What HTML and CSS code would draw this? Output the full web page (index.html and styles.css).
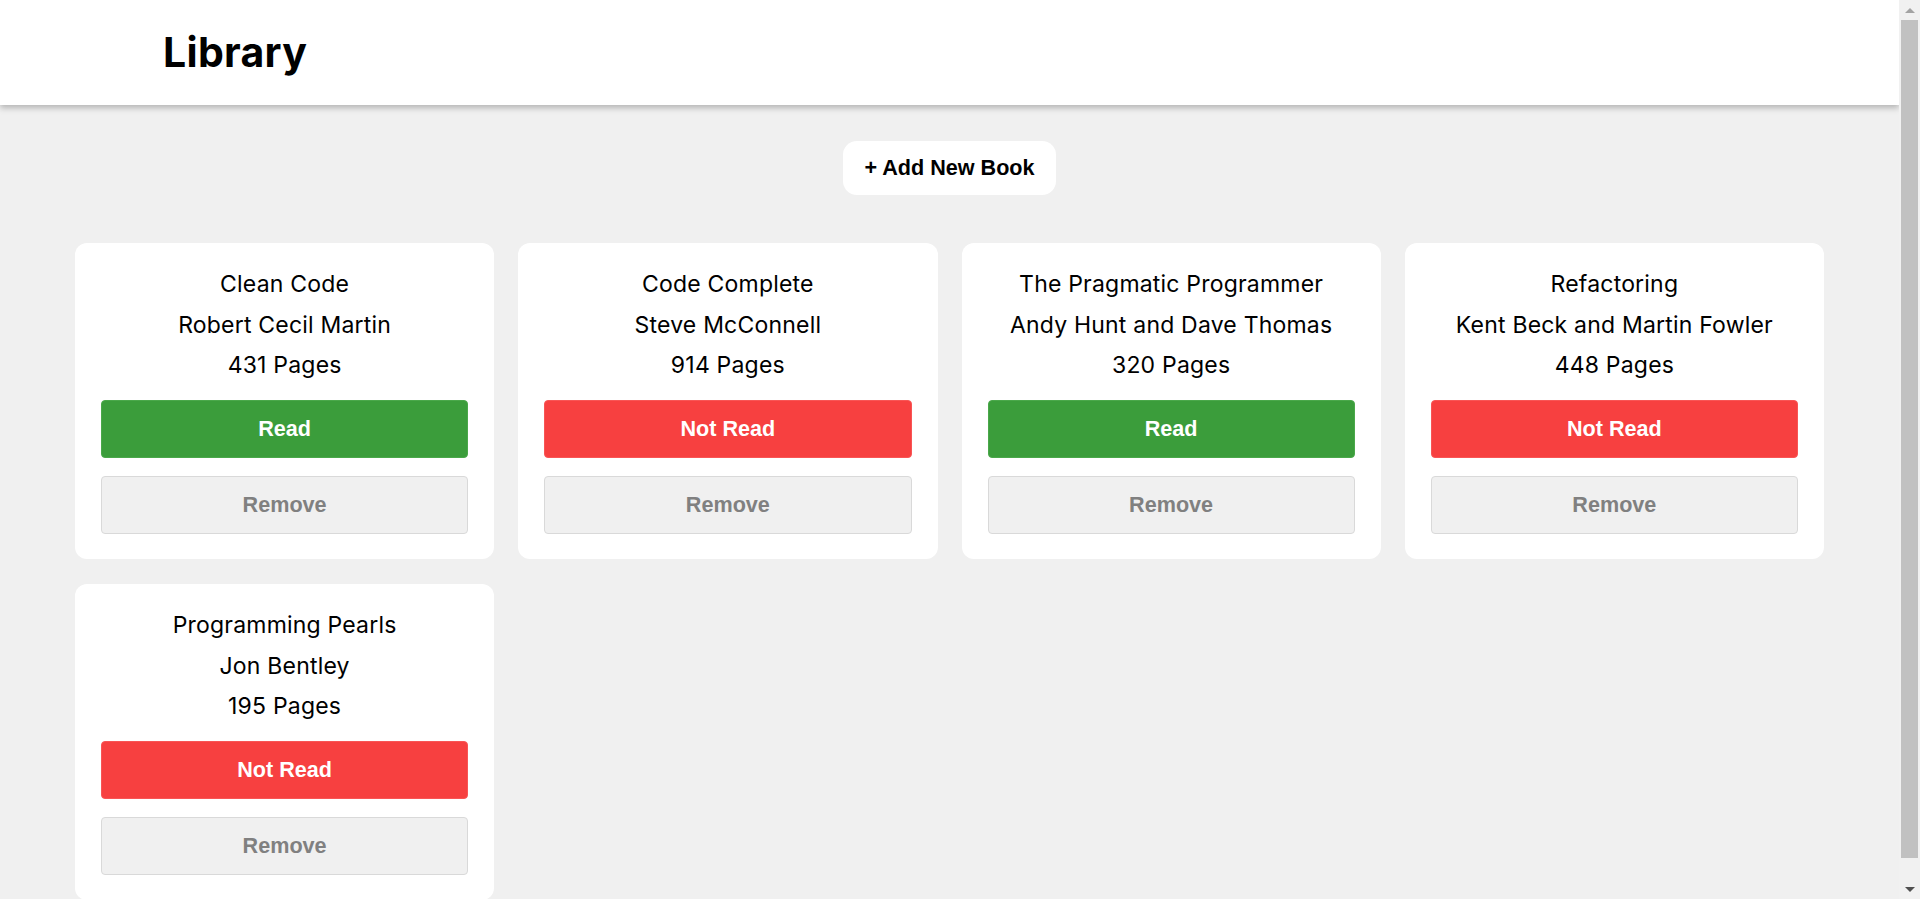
FILE: index.html
```html
<!DOCTYPE html>
<html lang="en">
<head>
<meta charset="utf-8">
<title>Library</title>
<link rel="stylesheet" href="styles.css">
</head>
<body>
<header class="topbar">
  <h1 class="brand">Library</h1>
</header>
<main class="content">
  <button class="add-btn">+ Add New Book</button>
  <section class="books">
    <article class="card">
      <p class="line">Clean Code</p>
      <p class="line">Robert Cecil Martin</p>
      <p class="line">431 Pages</p>
      <div class="actions">
        <button class="btn btn-read">Read</button>
        <button class="btn btn-remove">Remove</button>
      </div>
    </article>
    <article class="card">
      <p class="line">Code Complete</p>
      <p class="line">Steve McConnell</p>
      <p class="line">914 Pages</p>
      <div class="actions">
        <button class="btn btn-unread">Not Read</button>
        <button class="btn btn-remove">Remove</button>
      </div>
    </article>
    <article class="card">
      <p class="line">The Pragmatic Programmer</p>
      <p class="line">Andy Hunt and Dave Thomas</p>
      <p class="line">320 Pages</p>
      <div class="actions">
        <button class="btn btn-read">Read</button>
        <button class="btn btn-remove">Remove</button>
      </div>
    </article>
    <article class="card">
      <p class="line">Refactoring</p>
      <p class="line">Kent Beck and Martin Fowler</p>
      <p class="line">448 Pages</p>
      <div class="actions">
        <button class="btn btn-unread">Not Read</button>
        <button class="btn btn-remove">Remove</button>
      </div>
    </article>
    <article class="card">
      <p class="line">Programming Pearls</p>
      <p class="line">Jon Bentley</p>
      <p class="line">195 Pages</p>
      <div class="actions">
        <button class="btn btn-unread">Not Read</button>
        <button class="btn btn-remove">Remove</button>
      </div>
    </article>
  </section>
</main>
<div class="scrollbar" aria-hidden="true">
  <div class="sb-btn"><span class="arrow-up"></span></div>
  <div class="sb-thumb"></div>
  <div class="sb-gap"></div>
  <div class="sb-btn"><span class="arrow-down"></span></div>
</div>
</body>
</html>
```

FILE: styles.css
```css
html, body {
  margin: 0;
  padding: 0;
}

body {
  background: #f0f0f0;
  font-family: Inter, "Open Sans", sans-serif;
  color: #000;
  margin-right: 21px;
}

.topbar {
  height: 105px;
  box-sizing: border-box;
  background: #fff;
  display: flex;
  align-items: center;
  padding: 0 0 2px 163px;
  box-shadow: 0 3px 6px rgba(0, 0, 0, 0.25);
  position: relative;
  z-index: 1;
}

.brand {
  margin: 0;
  font-family: Inter, sans-serif;
  font-weight: 700;
  font-size: 41px;
  line-height: 48px;
  letter-spacing: 0.3px;
}

.content {
  padding: 36px 75px 28px 75px;
  display: flex;
  flex-direction: column;
}

.add-btn {
  align-self: center;
  width: 213px;
  height: 54px;
  border: none;
  border-radius: 14px;
  background: #fff;
  color: #000;
  font-family: "Liberation Sans", Arial, sans-serif;
  font-weight: 700;
  font-size: 21.6px;
  cursor: pointer;
}

.books {
  margin-top: 48px;
  display: grid;
  grid-template-columns: repeat(4, 1fr);
  gap: 25px 24px;
}

.card {
  background: #fff;
  border-radius: 12px;
  padding: 21px 26px 25px;
  text-align: center;
}

.line {
  margin: 0;
  font-size: 23px;
  line-height: 40px;
  font-weight: 400;
  letter-spacing: 0.2px;
}

.line + .line {
  padding-top: 1px;
  margin-top: -0.5px;
}

.actions {
  margin-top: 15px;
  display: flex;
  flex-direction: column;
  gap: 18px;
}

.btn {
  height: 58px;
  border-radius: 4px;
  font-family: "Liberation Sans", Arial, sans-serif;
  font-weight: 700;
  font-size: 21.6px;
  cursor: pointer;
}

.btn-read {
  background: #3b9d3b;
  border: 1px solid #4aa84a;
  color: #fff;
}

.btn-unread {
  background: #f74040;
  border: 1px solid #f85555;
  color: #fff;
}

.btn-remove {
  background: #f0f0f0;
  border: 1px solid #d9d9d9;
  color: #808080;
}

.scrollbar {
  position: fixed;
  top: 0;
  right: 0;
  width: 21px;
  height: 100vh;
  background: #f1f1f1;
  display: grid;
  grid-template-rows: 20px 838px 1fr 20px;
  z-index: 5;
}

.sb-btn {
  display: flex;
  align-items: center;
  justify-content: center;
}

.sb-thumb {
  background: #c1c1c1;
  margin: 0 2px;
}

.arrow-up {
  width: 0;
  height: 0;
  border-left: 5px solid transparent;
  border-right: 5px solid transparent;
  border-bottom: 5px solid #a3a3a3;
}

.arrow-down {
  width: 0;
  height: 0;
  border-left: 5px solid transparent;
  border-right: 5px solid transparent;
  border-top: 5px solid #505050;
}
```
